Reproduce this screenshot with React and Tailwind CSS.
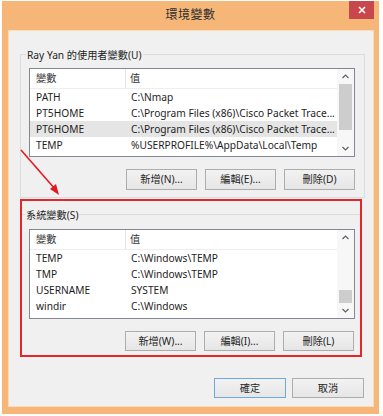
import React from "react";

const userVars = [
  { name: "PATH", value: "C:\\Nmap" },
  { name: "PT5HOME", value: "C:\\Program Files (x86)\\Cisco Packet Trace..." },
  { name: "PT6HOME", value: "C:\\Program Files (x86)\\Cisco Packet Trace...", selected: true },
  { name: "TEMP", value: "%USERPROFILE%\\AppData\\Local\\Temp" },
];

const systemVars = [
  { name: "TEMP", value: "C:\\Windows\\TEMP" },
  { name: "TMP", value: "C:\\Windows\\TEMP" },
  { name: "USERNAME", value: "SYSTEM" },
  { name: "windir", value: "C:\\Windows" },
];

const Chevron = ({ down }) => (
  <svg width="7" height="5" viewBox="0 0 7 5">
    <path
      d={down ? "M0.5 1 L3.5 4 L6.5 1" : "M0.5 4 L3.5 1 L6.5 4"}
      fill="none"
      stroke="#606060"
      strokeWidth="1.2"
    />
  </svg>
);

const Button = ({ children, w = "w-[71px]", h = "h-[21px]", primary }) => (
  <button
    className={`${w} ${h} flex items-center justify-center text-[10.2px] text-[#1e1e1e] bg-gradient-to-b from-[#f2f2f2] to-[#e6e6e6] border ${
      primary ? "border-[#6fa8dc]" : "border-[#adadad]"
    }`}
  >
    {children}
  </button>
);

const ListView = ({ rows, height, thumbClass }) => (
  <div className={`w-[326px] ${height} border border-[#828790] bg-white flex overflow-hidden`}>
    <div className="flex-1 min-w-0 flex flex-col">
      <div className="h-[20px] shrink-0 flex items-center border-b border-[#eeeeee] text-[#333]">
        <div className="w-[96px] shrink-0 h-full pl-[6px] flex items-center border-r border-[#e5e5e5]">變數</div>
        <div className="pl-[4px]">值</div>
      </div>
      {rows.map((r) => (
        <div
          key={r.name}
          className={`h-[16px] shrink-0 flex items-center whitespace-nowrap ${r.selected ? "bg-[#e5e5e5]" : ""}`}
        >
          <div className="w-[96px] shrink-0 pl-[6px]">{r.name}</div>
          <div className="pl-[5px]">{r.value}</div>
        </div>
      ))}
    </div>
    <div className="w-[17px] shrink-0 flex flex-col bg-[#f7f7f7]">
      <div className="h-[15px] flex items-center justify-center">
        <Chevron />
      </div>
      <div className="flex-1 px-[2px]">
        <div className={`bg-[#cdcdcd] ${thumbClass}`} />
      </div>
      <div className="h-[15px] flex items-center justify-center">
        <Chevron down />
      </div>
    </div>
  </div>
);

export default function App() {
  return (
    <div className="relative w-[383px] h-[416px] bg-white overflow-hidden font-['Noto_Sans','Noto_Sans_CJK_TC',sans-serif] text-[10.2px] leading-none text-[#1e1e1e]">
      <div className="ml-[2px] mt-[1px] w-[377px] h-[413px] bg-[#f5b677] flex flex-col">
        <div className="h-[29px] grid grid-cols-[1fr_auto_1fr]">
          <div />
          <div className="self-center text-[12px] tracking-[0.5px] text-[#2e2e2e] pb-[1px]">環境變數</div>
          <div className="flex justify-end pr-[5px]">
            <div className="w-[25px] h-[18px] bg-[#c8474c] flex items-center justify-center">
              <svg width="8" height="8" viewBox="0 0 8 8">
                <path d="M1 1 L7 7 M7 1 L1 7" stroke="white" strokeWidth="1.6" />
              </svg>
            </div>
          </div>
        </div>

        <div className="ml-[6px] w-[366px] h-[377px] bg-[#f0f0f0] border border-[#fadcbb] flex flex-col">
          {/* user variables */}
          <div className="relative ml-[11px] mt-[23px] w-[345px] border border-[#dcdcdc] pl-[8px] pr-[9px] pt-[13px] pb-[7px]">
            <span className="absolute left-[5px] -top-[8px] px-[1px] bg-[#f0f0f0] leading-[16px]">
              Ray Yan 的使用者變數(U)
            </span>
            <ListView rows={userVars} height="h-[89px]" thumbClass="h-[46px]" />
            <div className="mt-[12px] flex justify-end gap-[8px]">
              <Button>新增(N)...</Button>
              <Button>編輯(E)...</Button>
              <Button>刪除(D)</Button>
            </div>
          </div>

          {/* system variables, highlighted */}
          <div className="ml-[11px] mt-[1px] w-[342px] border-2 border-[#e3262b]">
            <div className="relative mt-[13px] border-t border-[#dcdcdc] pl-[7px] pr-[6px] pt-[14px] pb-[4px]">
              <span className="absolute left-[3px] -top-[8px] px-[1px] bg-[#f0f0f0] leading-[16px]">
                系統變數(S)
              </span>
              <ListView rows={systemVars} height="h-[90px]" thumbClass="mt-[45px] h-[13px]" />
              <div className="mt-[12px] flex justify-end gap-[8px]">
                <Button h="h-[20px]">新增(W)...</Button>
                <Button h="h-[20px]">編輯(I)...</Button>
                <Button h="h-[20px]">刪除(L)</Button>
              </div>
            </div>
          </div>

          <div className="mt-[21px] pr-[9px] flex justify-end gap-[6px]">
            <Button w="w-[72px]" h="h-[20px]" primary>確定</Button>
            <Button w="w-[72px]" h="h-[20px]">取消</Button>
          </div>
        </div>
      </div>

      <svg className="absolute left-0 top-0 pointer-events-none" width="383" height="416">
        <line x1="21" y1="150" x2="55" y2="189" stroke="#e3191f" strokeWidth="1.6" />
        <polygon points="59,195 50,189 56,184" fill="#e3191f" />
      </svg>
    </div>
  );
}
